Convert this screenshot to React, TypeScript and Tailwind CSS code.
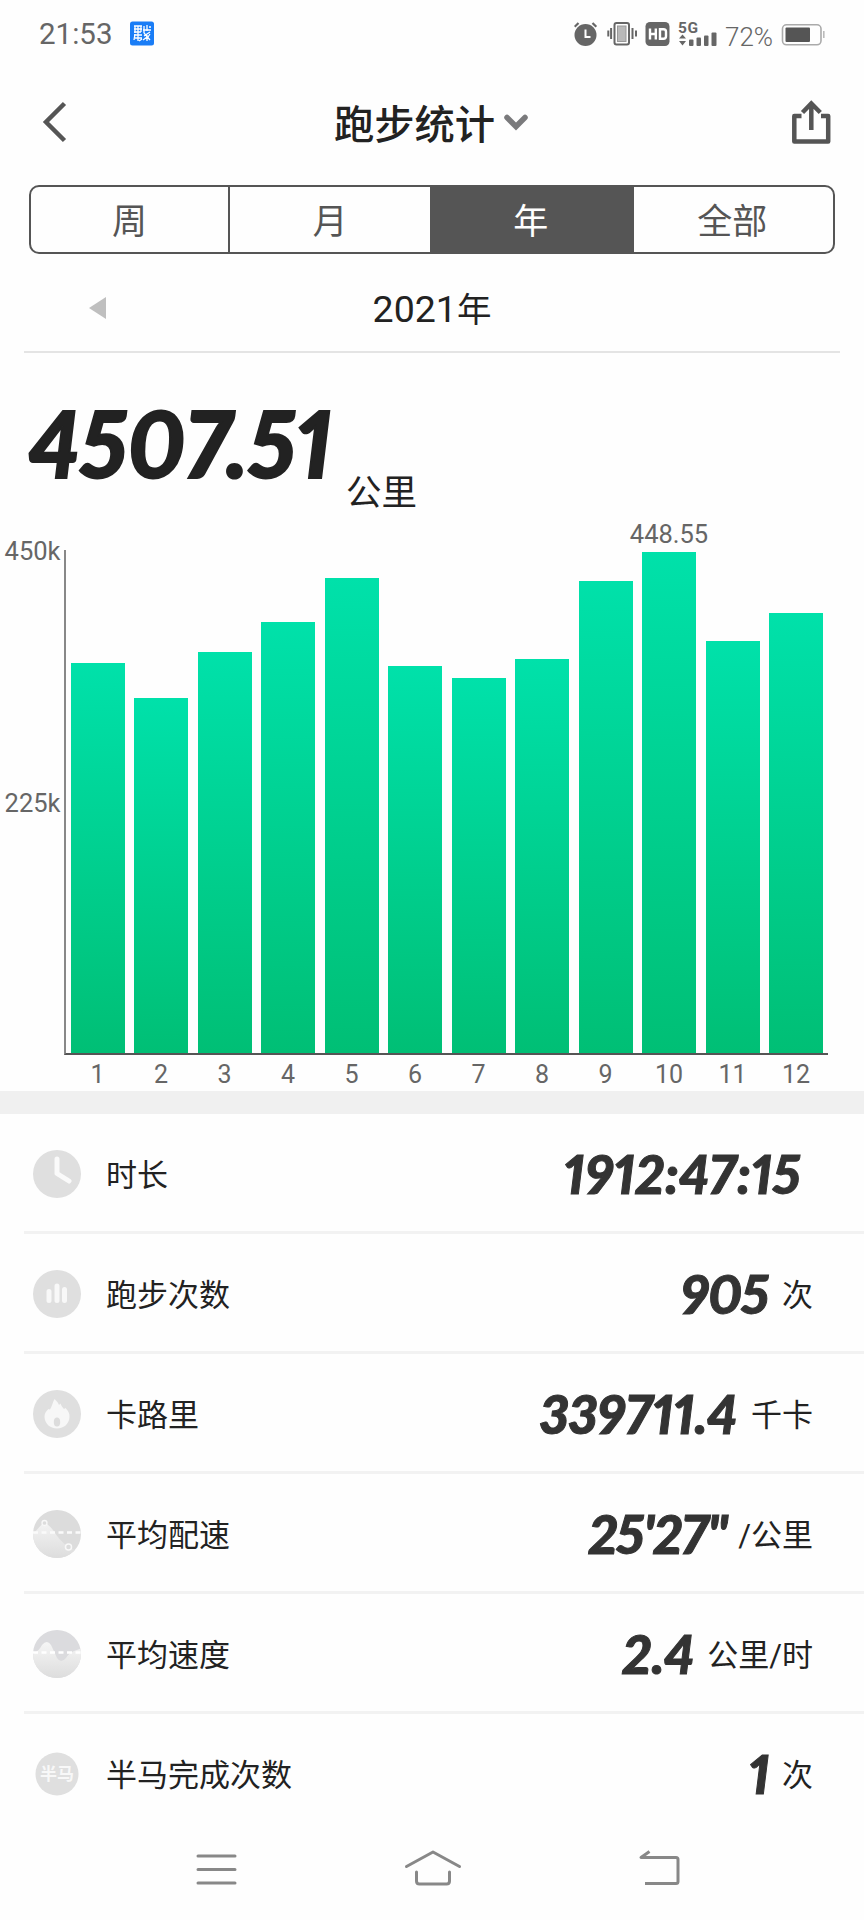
import React, { useState } from "react";

type Period = "周" | "月" | "年" | "全部";

const PERIODS: { name: Period; width: string }[] = [
  { name: "周", width: "w-[199px] border-r-2" },
  { name: "月", width: "w-[202px] border-r-2" },
  { name: "年", width: "w-[201.5px] pr-[4px]" },
  { name: "全部", width: "flex-1 pr-[2px]" },
];

// bar heights in px, one per month
const MONTHS = [390.5, 355.5, 401, 431, 475, 387, 375.5, 394.5, 472, 501.5, 412, 440.5];
const BEST_MONTH = 9;

const NUM = "font-[Lato,'Noto_Sans_CJK_SC',sans-serif] font-black italic proportional-nums";

function StatusBar() {
  return (
    <div className="h-[68px] flex items-start justify-between pl-[39px] pr-[38px] text-[#666]">
      <div className="flex items-start">
        <span className="mt-[16px] w-[91px] text-[29.5px] leading-[36px]">21:53</span>
        <svg className="mt-[21px]" width="25" height="25" viewBox="0 0 25 25">
          <rect x="0" y="0.5" width="24" height="24" rx="2.5" fill="#1a7df6" />
          <g stroke="#fff" strokeWidth="1.3" fill="none">
            <path d="M4 5h8M4 8h8M4 11h7M5 5v7M8 5v7M11 5v6M4 14h8M5 13l-1 6M8 12v8M5 17h7M9 20l3-2" />
            <path d="M14 5v7M17 4v6M13 9h8M19 6h2M20 11l-6 4M14 12l6 7M17 14v6M13 19l4-3M20 13l-2 3" />
          </g>
        </svg>
      </div>

      <div className="flex items-start">
        <svg className="mt-[20px]" width="150" height="28" viewBox="0 0 150 28">
          {/* alarm */}
          <g transform="translate(-0.5 0)">
            <circle cx="12" cy="15" r="11" fill="#666" />
            <path d="M1.2 6.8 5 3M22.8 6.8 19 3" stroke="#666" strokeWidth="2.2" />
            <path d="M12 9.5v7.5h5" stroke="#fff" strokeWidth="2" fill="none" />
          </g>
          {/* vibrate */}
          <g transform="translate(33.5 0)" stroke="#666" fill="none">
            <rect x="7" y="3" width="14.5" height="21.5" rx="2" strokeWidth="2" />
            <rect x="10" y="6" width="8.5" height="15.5" fill="#b9b9b9" stroke="#999" strokeWidth="1" />
            <path d="M3.6 8v11M25 8v11" strokeWidth="2" />
            <path d="M0.8 10.5v6M28.5 10.5v6" strokeWidth="2" />
          </g>
          {/* hd */}
          <rect x="71.5" y="2" width="24" height="24" rx="4.5" fill="#666" />
          <path d="M76 8.5v11M81.800 8.5v11M76 14h6M86 9.300h3.5q2.5 0 2.5 2.5v4.5q0 2.5-2.5 2.5h-3.5z" stroke="#fff" strokeWidth="2.400" fill="none" />
          {/* signal */}
          <text x="104" y="13.3" fontSize="15.5" fontWeight="700" fill="#666" textLength="20">5G</text>
          <path d="M105 18.500l3.5-4 3.5 4zM105 21l3.5 4.500 3.5-4.500z" fill="#666" />
          <g fill="#666">
            <rect x="115" y="19.5" width="4.5" height="6.5" rx="1" />
            <rect x="122.5" y="17.5" width="4.5" height="8.5" rx="1" />
            <rect x="130" y="15.5" width="4.5" height="10.5" rx="1" />
            <rect x="137.5" y="12.5" width="5" height="13.5" rx="1" />
          </g>
        </svg>
        <span className="mt-[23px] ml-[1px] w-[56px] text-[26px] leading-[28px] font-light">72%</span>
        <svg className="mt-[23px]" width="45" height="24" viewBox="0 0 45 24">
          <rect x="1.5" y="1.8" width="38.5" height="20" rx="4" fill="none" stroke="#aaa" strokeWidth="1.6" />
          <rect x="4.5" y="4.5" width="24.5" height="14.5" rx="1" fill="#555" />
          <rect x="42" y="8" width="1.6" height="7" fill="#bbb" />
        </svg>
      </div>
    </div>
  );
}

function TitleBar() {
  return (
    <header className="h-[110px] flex items-center justify-between pl-[42px] pr-[32px]">
      <svg className="-mt-[2px]" width="40" height="44" viewBox="0 0 40 44" fill="none" stroke="#555" strokeWidth="4.500">
        <path d="M22.5 3.5 4 22l18.5 18.5" />
      </svg>
      <div className="flex items-center pr-[11px]">
        <h1 className="pt-[5px] text-[40.3px] leading-[56px] font-medium text-[#222]">跑步统计</h1>
        <svg className="ml-[8px] -mt-[3px]" width="26" height="20" viewBox="0 0 26 20" fill="none" stroke="#7a7a7c" strokeWidth="5.5" strokeLinecap="round">
          <path d="M4 5.5l9 9 9-9" />
        </svg>
      </div>
      <svg className="-mt-[2px]" width="40" height="46" viewBox="0 0 40 46" fill="none" stroke="#555" strokeWidth="4.500">
        <path d="M9.500 17H2.300v25.500h33.900V17H29" strokeLinejoin="round" />
        <path d="M19.300 31V5M10.500 13.500 19.300 4.500l9 9" />
      </svg>
    </header>
  );
}

function Chart() {
  return (
    <div className="pt-[27px]">
      <div className="flex">
        <div className="w-[64px] h-[505px] flex flex-col gap-[228px] text-right pr-[3.5px] text-[25.5px] leading-[24px] text-[#666]">
          <span className="-mt-[11px]">450k</span>
          <span>225k</span>
        </div>
        <div className="w-[764px] h-[505px] flex items-end gap-[9.5px] border-l-2 border-b-2 border-l-[#888] border-b-[#555] pl-[4.5px]">
          {MONTHS.map((height, i) => (
            <div
              key={i}
              className="relative w-[54px] shrink-0 bg-linear-to-b from-[#00e1aa] to-[#00bf75]"
              style={{ height }}
            >
              {i === BEST_MONTH && (
                <span className="absolute -top-[33px] left-1/2 -translate-x-1/2 text-[25.5px] leading-[30px] text-[#666]">
                  448.55
                </span>
              )}
            </div>
          ))}
        </div>
      </div>
      <div className="flex h-[36px] pl-[70.5px] gap-[9.5px] text-[25px] leading-[39px] text-[#666]">
        {MONTHS.map((_, i) => (
          <span key={i} className="w-[54px] shrink-0 text-center">{i + 1}</span>
        ))}
      </div>
    </div>
  );
}

const ICON = { width: 50, height: 50, viewBox: "0 0 50 50" };

function ClockIcon() {
  return (
    <svg {...ICON}>
      <circle cx="25" cy="25" r="24" fill="#dfdfdf" />
      <path d="M25 10v14.5l12 7.5" stroke="#fafafa" strokeWidth="5" strokeLinecap="round" strokeLinejoin="round" fill="none" />
    </svg>
  );
}

function CountIcon() {
  return (
    <svg {...ICON}>
      <circle cx="25" cy="25" r="24" fill="#dfdfdf" />
      <path d="M17 22.5v9M25 17v14.5M32.5 20.5v11" stroke="#f8f8f8" strokeWidth="5" strokeLinecap="round" />
    </svg>
  );
}

function FireIcon() {
  return (
    <svg {...ICON}>
      <circle cx="25" cy="25" r="24" fill="#dfdfdf" />
      <path d="M22.5 10c2 2 3.500 3.500 4.500 6l1.500-1.500c1 2.500 2 4 3.500 5.500l1.500-1c3 3 4 5.500 4 8.500 0 7-5.500 12-12.500 12S12.500 34.500 12.500 27.500c0-3 1.500-5 4-7.500l1.500 .5c2-3 2.500-7 4.500-10.500z" fill="#f7f7f7" />
      <ellipse cx="25" cy="33" rx="3.200" ry="4.500" fill="#dcdcdc" />
    </svg>
  );
}

function PaceIcon() {
  return (
    <svg {...ICON}>
      <defs>
        <linearGradient id="pace" x1="0" y1="0" x2="0" y2="1">
          <stop offset="0" stopColor="#f4f4f4" />
          <stop offset="1" stopColor="#dcdcdc" />
        </linearGradient>
        <clipPath id="disc"><circle cx="25" cy="25" r="24" /></clipPath>
      </defs>
      <g clipPath="url(#disc)">
        <rect width="50" height="50" fill="#dcdcdc" />
        <path d="M0 26 12 13q5 3 9 8 6 10 15 17l14 6v6H0z" fill="url(#pace)" />
      </g>
      <circle cx="12.5" cy="14" r="2.5" fill="#dcdcdc" stroke="#f8f8f8" strokeWidth="1.3" />
      <circle cx="36.5" cy="38" r="3" fill="#dcdcdc" stroke="#f8f8f8" strokeWidth="1.5" />
      <path d="M1 23.5h48" stroke="#fafafa" strokeWidth="2.5" strokeDasharray="5 3.5" />
    </svg>
  );
}

function SpeedIcon() {
  return (
    <svg {...ICON}>
      <defs>
        <linearGradient id="speed" x1="0" y1="0" x2="0" y2="1">
          <stop offset="0" stopColor="#f6f6f6" />
          <stop offset="1" stopColor="#dcdcdc" />
        </linearGradient>
      </defs>
      <g clipPath="url(#disc)">
        <rect width="50" height="50" fill="#dbdbde" />
        <path d="M0 26q7-4 10-10 5-6 9 0 3 6 6 13 4 6 9 0 3-5 8-7l8-3v31H0z" fill="url(#speed)" />
      </g>
      <path d="M1 23.5h48" stroke="#fff" strokeWidth="2.5" strokeDasharray="5 3.5" />
    </svg>
  );
}

function HalfMarathonIcon() {
  return (
    <svg {...ICON}>
      <circle cx="25" cy="25" r="21.5" fill="#dfdfdf" />
      <text x="25" y="31" fontSize="17" fontWeight="700" fill="#f8f8f8" textAnchor="middle">半马</text>
    </svg>
  );
}

type Stat = {
  label: string;
  value: string;
  unit: string;
  tracking: string;
  icon: React.ReactNode;
};

const STATS: Stat[] = [
  { label: "时长", value: "1912:47:15", unit: "", tracking: "tracking-[0.3px] mr-[12px]", icon: <ClockIcon /> },
  { label: "跑步次数", value: "905", unit: "次", tracking: "tracking-[-1px]", icon: <CountIcon /> },
  { label: "卡路里", value: "339711.4", unit: "千卡", tracking: "tracking-[-0.2px]", icon: <FireIcon /> },
  { label: "平均配速", value: "25'27\"", unit: "/公里", tracking: "tracking-[-1px] -mr-[3px]", icon: <PaceIcon /> },
  { label: "平均速度", value: "2.4", unit: "公里/时", tracking: "-mr-[1px]", icon: <SpeedIcon /> },
  { label: "半马完成次数", value: "1", unit: "次", tracking: "-mr-[2px]", icon: <HalfMarathonIcon /> },
];

function StatRow({ label, value, unit, tracking, icon }: Stat) {
  return (
    <li className="ml-[24px] h-[120px] flex items-center border-b-3 border-[#f2f2f2] last:border-transparent pl-[8px] pr-[51px] pt-[2px] text-[#222]">
      {icon}
      <span className="ml-[24px] pt-[5px] text-[31px] leading-[40px]">{label}</span>
      <span className={`${NUM} ml-auto text-[54px] leading-[60px] text-[#333] [-webkit-text-stroke:1px_#333] ${tracking}`}>
        {value}
      </span>
      {unit && <span className="ml-[14px] pt-[5px] text-[31px] leading-[40px]">{unit}</span>}
    </li>
  );
}

function NavBar() {
  return (
    <nav className="flex pl-[195px] pt-[14px]">
      <svg width="42" height="42" viewBox="0 0 42 42" stroke="#888" strokeWidth="3" strokeLinecap="round">
        <path d="M3 8h37M3 21.5h37M3 35h37" />
      </svg>
      <svg className="ml-[166.5px]" width="58" height="42" viewBox="0 0 58 42" fill="none" stroke="#888" strokeWidth="3" strokeLinecap="round" strokeLinejoin="round">
        <path d="M2.5 18.5 29 4l26.5 14.5M12.5 24v9q0 3 3 3h27q3 0 3-3v-9" />
      </svg>
      <svg className="ml-[175.5px]" width="44" height="42" viewBox="0 0 44 42" fill="none" stroke="#888" strokeWidth="3" strokeLinejoin="round">
        <path d="M12.5 3.5 4 9.5h35q2 0 2 2V33.500q0 2-2 2H8" />
      </svg>
    </nav>
  );
}

export default function App() {
  const [period, setPeriod] = useState<Period>("年");

  return (
    <div className="w-[864px] h-[1920px] overflow-hidden bg-[#fefefe] font-[Roboto,'Noto_Sans_CJK_SC',sans-serif]">
      <StatusBar />
      <TitleBar />

      <div className="mt-[7px] mx-[29px] h-[69px] flex rounded-[10px] border-2 border-[#555] overflow-hidden">
        {PERIODS.map(({ name, width }) => (
          <button
            key={name}
            onClick={() => setPeriod(name)}
            className={`${width} border-[#555] pt-[6px] text-[35px] leading-[50px] ${name === period ? "bg-[#555] text-white" : "text-[#555]"}`}
          >
            {name}
          </button>
        ))}
      </div>

      <div className="mx-[24px] h-[99px] flex items-center border-b-2 border-[#e4e4e4] pl-[65px] pr-[82px]">
        <svg className="mt-[10px]" width="17" height="24" viewBox="0 0 17 24">
          <path d="M17 1v22L0 12z" fill="#bfbfbf" />
        </svg>
        <div className="flex-1 mt-[14px] text-center text-[34.5px] leading-[50px] text-[#222]">
          <span className="text-[37.5px]">2021</span>年
        </div>
      </div>

      <div className="h-[170px] flex items-start pl-[29px] text-[#222]">
        <span className={`${NUM} mt-[38px] text-[91px] leading-[104px] tracking-[0.8px] [-webkit-text-stroke:2px_#222]`}>
          4507.51
        </span>
        <span className="mt-[115px] ml-[13px] text-[35.5px] leading-[50px]">公里</span>
      </div>

      <Chart />

      <div className="h-[23px] bg-[#f0f0f0]" />

      <ul>
        {STATS.map((s) => (
          <StatRow key={s.label} {...s} />
        ))}
      </ul>

      <NavBar />
    </div>
  );
}
